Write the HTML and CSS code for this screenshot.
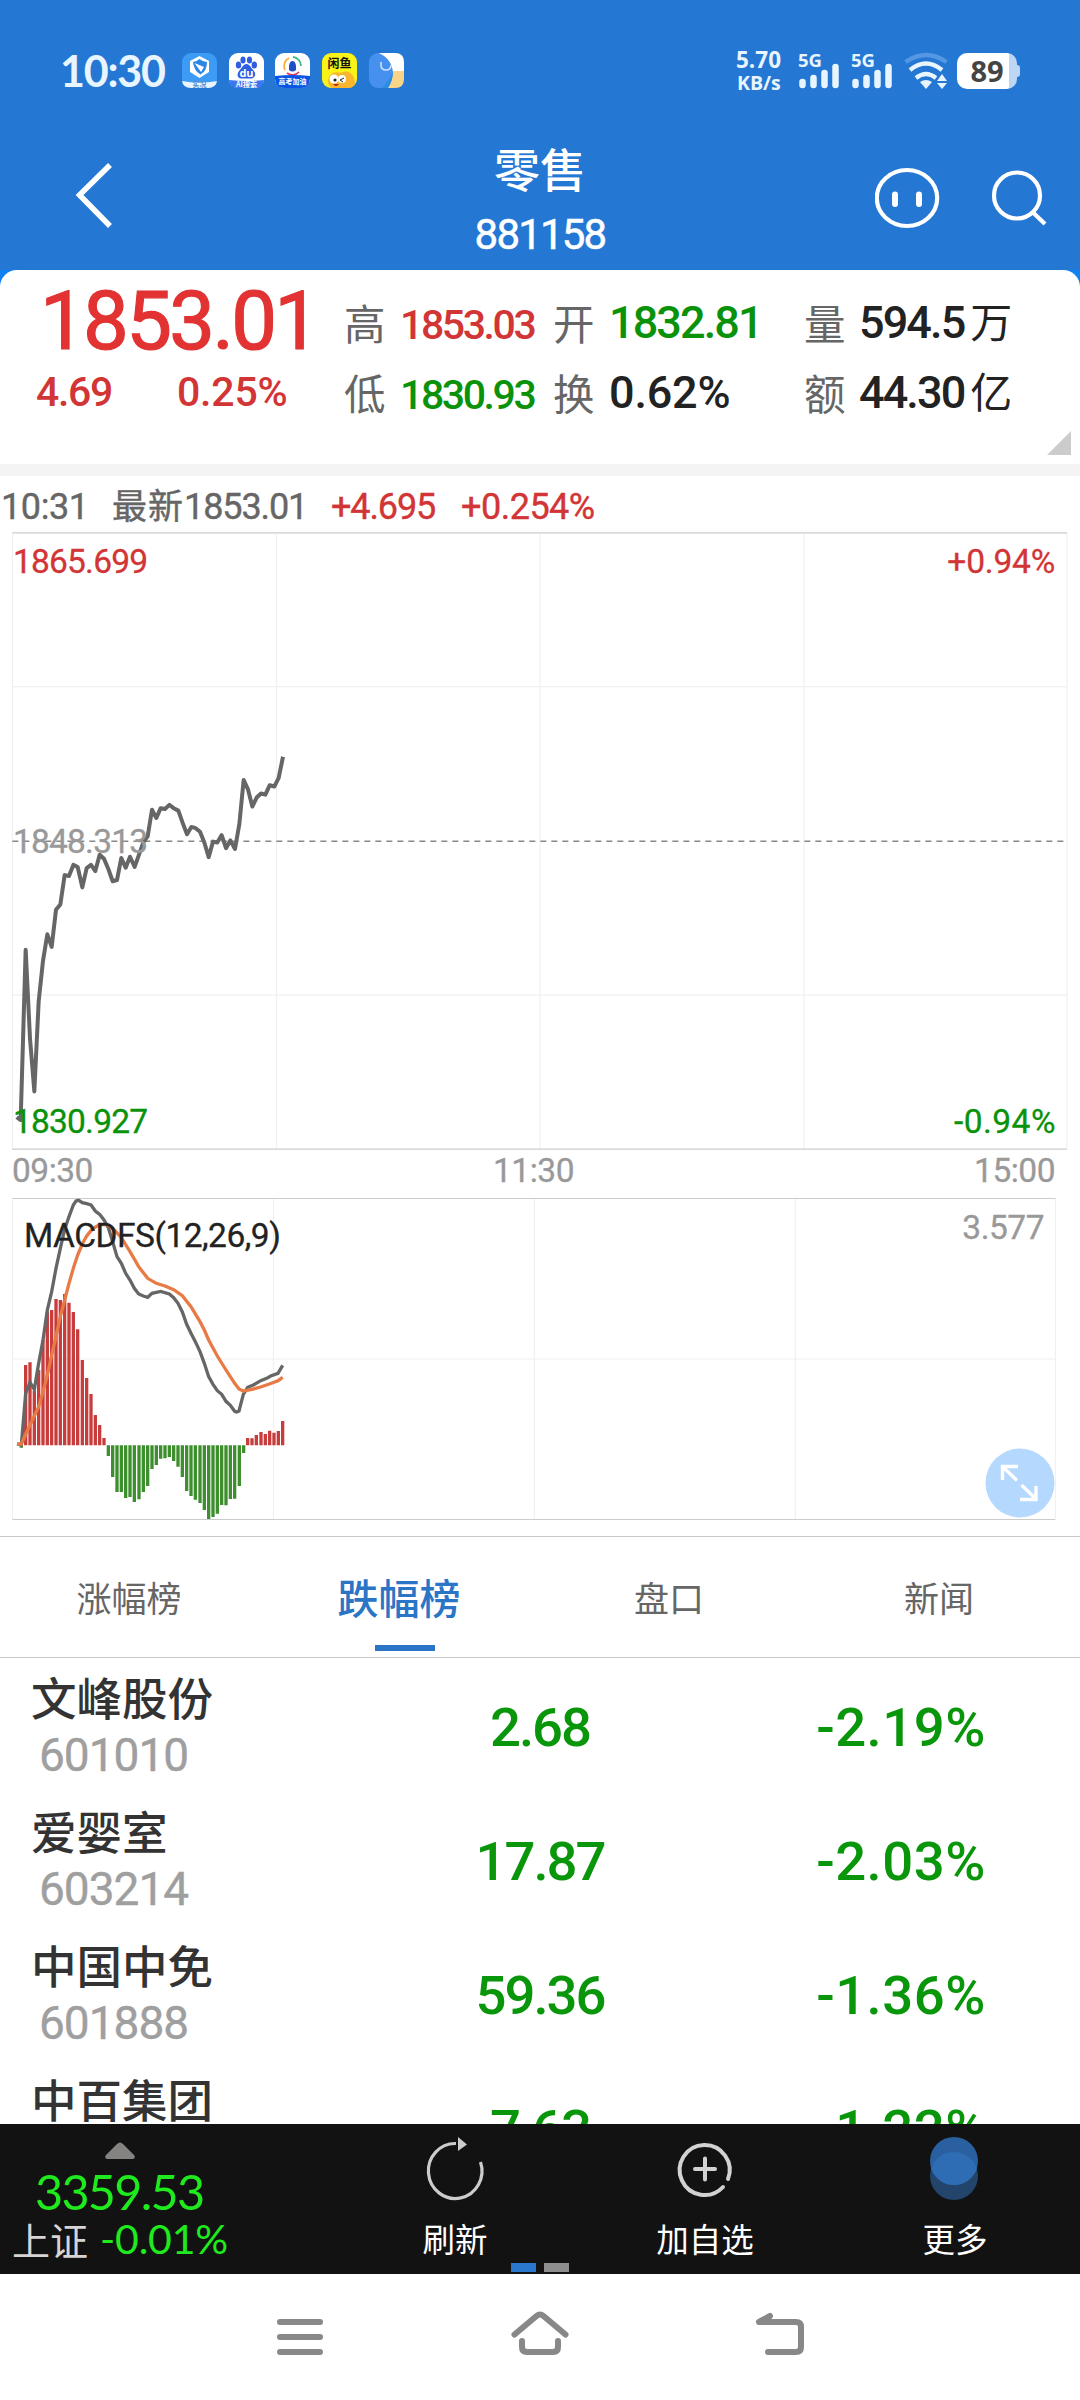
FILE: index.html
```html
<!DOCTYPE html>
<html lang="zh-CN">
<head>
<meta charset="utf-8">
<title>零售 881158</title>
<link rel="stylesheet" href="styles.css">
</head>
<body>
<div class="phone">
  <header class="top">
    <div class="status">
      <span class="clock">10:30</span>
      <div class="apps">
        <svg viewBox="0 0 35 35"><rect width="35" height="35" rx="9" fill="#3d9af5"/><path d="M0 28Q17.500 31 35 28Q34 35 26 35H9Q1 35 0 28Z" fill="#e8f4ff"/><path d="M17.500 3L27 8V19L17.500 25L8 19V8Z" fill="#fff"/><path d="M17.500 6Q21 9 25 9Q25 18 18.500 21.500Q12 18 11 9Q14 9 17.500 6Z" fill="#2b86e6"/><path d="M12.500 10L22 14L19 19Z" fill="#fff"/><text x="17.500" y="33.500" text-anchor="middle" class="mini mini-blue">实况</text></svg>
        <svg viewBox="0 0 35 35"><rect width="35" height="35" rx="9" fill="#fff"/><g fill="#2f5fe0"><ellipse cx="9.500" cy="12" rx="2.700" ry="3.500"/><ellipse cx="14" cy="7" rx="2.600" ry="3.500"/><ellipse cx="20.500" cy="7" rx="2.600" ry="3.500"/><ellipse cx="25.300" cy="12" rx="2.700" ry="3.500"/><path d="M17.500 11C21 11 22 15 25 18C28 22 25 26 21 25.500H13C9 26 7 22 10 18C13 15 14 11 17.500 11Z"/></g><text x="17.500" y="24" text-anchor="middle" class="du">du</text><path d="M0 27Q17.500 29 35 27Q34 35 26 35H9Q1 35 0 27Z" fill="#3b77ee"/><text x="17.500" y="33.500" text-anchor="middle" class="mini">AI搜索</text></svg>
        <svg viewBox="0 0 35 35"><rect width="35" height="35" rx="9" fill="#fff"/><g fill="none" stroke-width="1.800"><path d="M10 17A9 9 0 0 1 14 5" stroke="#f3b13c"/><path d="M18 4A9 9 0 0 1 26 13" stroke="#3fba8b"/><path d="M12 20A9 9 0 0 0 24 19" stroke="#e03a5a"/></g><path d="M17.500 8C20 8 21 11 21 14V17Q17.500 20 14 17V14C14 11 15 8 17.500 8Z" fill="#1b50c8"/><path d="M0 23Q17.500 21 35 23V26Q34 35 26 35H9Q1 35 0 26Z" fill="#0a55e6"/><text x="17.500" y="31" text-anchor="middle" class="mini">高考加油</text></svg>
        <svg viewBox="0 0 35 35"><rect width="35" height="35" rx="9" fill="#fbf217"/><path d="M6 28C7 20 13 18 19 20C25 16 33 20 33 31Q31 35 26 35H10Q6 33 6 28Z" fill="#f9b52d"/><circle cx="12" cy="26" r="4.500" fill="#fff"/><circle cx="20" cy="26" r="4" fill="#fff"/><circle cx="13" cy="27" r="1.600" fill="#222"/><path d="M22 25L18 27L21 29" fill="none" stroke="#222"/><path d="M11 31H17Q14 35 11 31Z" fill="#c0201a"/><text x="17.500" y="15" text-anchor="middle" class="fish">闲鱼</text></svg>
        <svg viewBox="0 0 35 35"><rect width="35" height="35" rx="9" fill="#4691f0"/><path d="M10 0H26Q35 0 35 9V20H24Q23 6 10 0Z" fill="#fff"/><path d="M24 18H35V26Q35 35 26 35H19Q24 27 24 18Z" fill="#f8d486"/><path d="M24 18Q24 27 19 35H13Q21 26 24 18Z" fill="#2a8de2"/><path d="M12 9V12Q12 17 17 17Q22 17 22 12" fill="none" stroke="#cfe4ff" stroke-width="1.600"/></svg>
      </div>
      <div class="net"><span>5.70</span><span class="unit">KB/s</span></div>
      <div class="signal"><span>5G</span><svg viewBox="0 0 42 26"><path d="M4.500 19V22M15.500 15V22M26.500 10V22M37.500 4V22" /></svg></div>
      <div class="signal"><span>5G</span><svg viewBox="0 0 42 26"><path d="M4.500 19V22M15.500 15V22M26.500 10V22M37.500 4V22" /></svg></div>
      <svg class="wifi" viewBox="0 0 44 38" fill="none" stroke="#e8f5ff" stroke-width="4.200"><path d="M1.500 10Q22 -4 42.500 10" stroke="#5497e2"/><path d="M6 18Q22 5 38 18"/><path d="M12 26Q22 18 32 26"/><path d="M16 30Q22 26 28 30L22 37ZM33 29L38 22L43 29ZM33 31H43L38 37Z" fill="#e8f5ff" stroke="none"/></svg>
      <div class="battery"><span>89</span></div>
    </div>
    <div class="titlebar">
      <svg class="back" viewBox="0 0 60 80"><path d="M43 10L12.500 40L43 71"/></svg>
      <h1><span>零售</span><span class="code">881158</span></h1>
      <svg class="tools" viewBox="0 0 190 80"><ellipse cx="32" cy="43" rx="30.200" ry="28"/><path class="eyes" d="M20 39.500V49M44 39.500V49"/><circle cx="142" cy="40.500" r="23"/><path d="M158 57.500L170 69"/></svg>
    </div>
  </header>

  <div class="corners">
    <section class="quote">
      <div class="last">
        <strong>1853.01</strong>
        <div class="delta"><span>4.69</span><span>0.25%</span></div>
      </div>
      <dl class="stats">
        <dt>高</dt><dd class="up small">1853.03</dd><dt>开</dt><dd class="down">1832.81</dd><dt>量</dt><dd>594.5<i>万</i></dd>
        <dt>低</dt><dd class="down small">1830.93</dd><dt>换</dt><dd class="wide">0.62%</dd><dt>额</dt><dd>44.30<i>亿</i></dd>
      </dl>
      <i class="expand-mark"></i>
    </section>
  </div>

  <div class="ticker"><span class="t-time">10:31</span><span class="t-last"><i>最新</i>1853.01</span><span class="up t-chg">+4.695</span><span class="up t-pct">+0.254%</span></div>

  <section class="chart price">
    <svg viewBox="0 29.400 3240 1516.550" preserveAspectRatio="none">
      <g class="grid"><path d="M37.500 31V1542M829.500 31V1542M1620 31V1542M2412 31V1542M3201 31V1542M37 408H3201M37 1164H3201"/></g>
      <path class="edge" d="M37 31.500H3201M37 1541.500H3201"/>
      <path class="dash" d="M37 787H3190"/>
      <path class="line" d="M50 1463L62 1470L77 1053L90 1270L103 1400L116 1180L129 1080L142 1015L155 1046L168 955L181 942L194 870L207 872L220 845L233 850L247 900L260 853L273 845L286 860L299 820L312 830L325 855L338 885L351 882L364 828L377 852L390 825L404 850L417 820L430 790L443 775L456 710L469 730L482 706L495 708L508 698L521 706L535 712L548 742L561 770L574 752L587 755L600 764L613 790L626 826L639 788L652 790L665 772L678 804L691 785L705 806L718 745L731 637L744 660L757 702L770 680L783 670L796 673L809 650L823 653L836 632L849 580"/>
    </svg>
    <span class="tag hi up">1865.699</span><span class="tag mid">1848.313</span><span class="tag lo down">1830.927</span>
    <span class="tag right hi up">+0.94%</span><span class="tag right lo down">-0.94%</span>
  </section>
  <div class="axis"><span>09:30</span><span>11:30</span><span>15:00</span></div>
  <section class="chart macd">
    <svg viewBox="0 171 3240 975">
      <g class="grid"><path d="M37.500 175V1138M820.500 175V1138M1603 175V1138M2386 175V1138M3166.500 175V1138M37 657H3166"/></g>
      <path class="edge" d="M37 175.500H3166M37 1138.500H3166"/>
      <path class="bars red" d="M77 916V675M90 916V667M103 916V752M116 916V690M129 916V600M142 916V515M155 916V510M168 916V477M181 916V480M194 916V462M207 916V488M220 916V516M233 916V568M247 916V660M260 916V714M273 916V762M286 916V825M299 916V855M312 916V894M743 916V894M756 916V895M769 916V885M783 916V876M796 916V882M809 916V872M822 916V878M835 916V873M848 916V843"/>
      <path class="bars green" d="M64 916V923M325 916V948M338 916V1011M351 916V1056M364 916V1056M377 916V1074M390 916V1071M403 916V1086M417 916V1078M430 916V1056M443 916V1038M456 916V987M469 916V975M482 916V956M495 916V955M508 916V951M521 916V963M534 916V980M547 916V1011M560 916V1053M573 916V1068M586 916V1079M600 916V1089M613 916V1110M626 916V1137M639 916V1131M652 916V1121M665 916V1095M678 916V1096M691 916V1077M704 916V1076M718 916V1038M731 916V939"/>
      <path class="dif" d="M51 912L64 915L77 760L90 727L103 748L116 670L129 600L142 510L155 455L168 385L181 325L194 268L207 230L220 195L228 183L236 181L247 188L260 191L273 195L286 213L299 223L312 240L325 263L338 305L351 350L364 370L377 400L390 420L403 445L416 462L430 468L443 472L456 460L482 454L508 462L521 473L534 490L547 516L560 553L573 580L586 605L600 635L613 670L626 710L639 733L652 752L665 763L678 784L691 796L704 814L710 816L717 813L730 763L743 742L760 735L782 722L800 715L812 708L834 700L848 676"/>
      <path class="dea" d="M51 912L64 912L90 855L116 800L129 755L142 705L155 645L168 590L181 530L194 480L207 430L220 385L233 345L247 312L260 288L273 272L286 261L299 254L320 254L338 264L364 293L390 335L416 380L443 415L469 430L495 438L521 449L547 467L573 500L600 545L613 570L626 600L652 648L678 690L704 730L717 747L730 753L756 748L782 741L808 732L834 722L848 712"/>
    </svg>
    <span class="tag name">MACDFS(12,26,9)</span><span class="tag peak">3.577</span>
    <svg class="zoom-btn" viewBox="0 0 70 70"><circle cx="35" cy="35" r="34.500" fill="#b5d8fe"/><path d="M17.500 32V18.500H33M17.500 18.500L32 32.500M36.500 37L51 51M51 38V51.500H35" fill="none" stroke="#fff" stroke-width="3.400"/></svg>
  </section>

  <nav class="tabs"><span>涨幅榜</span><span class="on">跌幅榜</span><span>盘口</span><span>新闻</span></nav>

  <main class="list">
    <div class="row"><div class="stock"><b>文峰股份</b><span>601010</span></div><span class="num">2.68</span><span class="num pct">-2.19%</span></div>
    <div class="row"><div class="stock"><b>爱婴室</b><span>603214</span></div><span class="num">17.87</span><span class="num pct">-2.03%</span></div>
    <div class="row"><div class="stock"><b>中国中免</b><span>601888</span></div><span class="num">59.36</span><span class="num pct">-1.36%</span></div>
    <div class="row"><div class="stock"><b>中百集团</b></div><span class="num">7.63</span><span class="num pct">-1.22%</span></div>
  </main>

  <footer class="dock">
    <div class="index">
      <svg viewBox="0 0 30 17"><path d="M2 17Q-1 16 1 13L12 2Q15 -1 18 2L29 13Q31 16 28 17Z" fill="#858282"/></svg>
      <span class="value">3359.53</span>
      <span class="chg"><i>上证</i><span>-0.01%</span></span>
    </div>
    <div class="action refresh"><svg viewBox="0 0 70 70"><path d="M36 9.500A26.800 27.500 0 1 0 60.500 28" fill="none" stroke="#ccc" stroke-width="3.200"/><path d="M38 3L47 10.500L38 17Z" fill="#ccc"/></svg><span>刷新</span></div>
    <div class="action add"><svg viewBox="0 0 70 70" fill="none" stroke="#d2d2d2" stroke-width="4" stroke-linecap="round"><path d="M53 53A25 25 0 1 1 58 45M35 24.500V45.500M25 35H45"/></svg><span>加自选</span></div>
    <div class="action more"><svg viewBox="0 0 70 70"><circle cx="34" cy="42" r="24" fill="#23456c"/><circle cx="34" cy="27" r="24" fill="#2a609f"/><path d="M11.200 34.500A24 24 0 0 1 56.800 34.500A24 24 0 0 1 11.200 34.500Z" fill="#2e6db3"/></svg><span>更多</span></div>
    <div class="pager"><i></i><i></i></div>
  </footer>

  <div class="sysnav">
    <svg viewBox="0 0 1080 126"><path d="M280 48H320M280 63H320M280 78H320M514.500 60.500L536.500 42Q540 39 543.500 42L565.500 60.500M522 67V73Q522 78 527 78H553Q558 78 558 73V67M770 42L759 48H796Q801 48 801 53V73Q801 78 796 78H768"/></svg>
  </div>
</div>
</body>
</html>
```

FILE: styles.css
```css
* { box-sizing: border-box; }
body { margin: 0; background: #fff; }
i { font-style: normal; }
svg { display: block; }

.phone {
  width: 1080px;
  height: 2400px;
  overflow: hidden;
  display: flex;
  flex-direction: column;
  font-family: Roboto, "Noto Sans CJK SC", sans-serif;
  color: #222;
  background: #fff;
}

.up { color: #d23535; }
.down { color: #0a920a; }

/* header */
.top { height: 270px; background: #2577d4; color: #fff; }
.status { height: 140px; padding: 1px 60px 0 60px; display: flex; align-items: center; }
.clock { font: 700 43px/50px Lato, sans-serif; color: #e8f5ff; width: 122px; letter-spacing: -1.200px; }
.apps { display: flex; gap: 11.700px; width: 554px; }
.apps svg { width: 35px; height: 35px; }
.mini { font: 700 7px "Noto Sans CJK SC", sans-serif; fill: #fff; }
.mini-blue { fill: #4b8fd0; }
.du { font: 700 11px "Open Sans", sans-serif; fill: #fff; }
.fish { font: 700 12px "Noto Sans CJK SC", sans-serif; fill: #111; }
.net { width: 62px; display: flex; flex-direction: column; font: 700 22.500px/23px "Open Sans", sans-serif; color: #e8f5ff; }
.net .unit { font-size: 19.500px; margin-left: 1px; }
.signal { width: 53px; height: 37px; font: 700 18.500px/16px "Open Sans", sans-serif; color: #e8f5ff; display: flex; flex-direction: column; }
.signal svg { width: 42px; height: 26px; margin-top: -5px; }
.signal path { stroke: #e8f5ff; stroke-width: 6.500; stroke-linecap: round; }
.wifi { width: 44px; height: 38px; }
.battery { width: 60px; height: 36px; margin-left: 9px; border-radius: 10px; background: linear-gradient(90deg, #fff 52px, #bcd6f3 52px); text-align: center; font: 700 29px/36px "Open Sans", sans-serif; color: #444; position: relative; }
.battery::after { content: ""; position: absolute; right: -3px; top: 12px; width: 4px; height: 12px; border-radius: 0 3px 3px 0; background: #bcd6f3; }

.titlebar { display: flex; height: 130px; padding-top: 15px; }
.back { width: 60px; height: 80px; margin-left: 67px; }
.back path { fill: none; stroke: #fff; stroke-width: 5.500; }
.titlebar h1 { margin: -18px 0 0 323px; width: 180px; font: 500 46px/60px "Noto Sans CJK SC", sans-serif; text-align: center; display: flex; flex-direction: column; }
.titlebar .code { font: 400 42px/62px Roboto, sans-serif; letter-spacing: -1.800px; margin-top: 7px; -webkit-text-stroke: .5px #fff; }
.tools { width: 190px; height: 80px; margin-left: 245px; fill: none; stroke: #fff; stroke-width: 4.200; }
.tools .eyes { stroke-width: 6; stroke-linecap: round; }

/* quote */
.corners { background: #1180f5; }
.quote { height: 206px; border-bottom: 12px solid #f4f4f4; border-radius: 17px 17px 0 0; background: #fff; display: flex; position: relative; }
.last { width: 344px; }
.last strong { display: block; height: 96px; padding-left: 40px; font: 400 81.500px/103px Roboto, sans-serif; letter-spacing: -2.700px; color: #e23232; -webkit-text-stroke: 1.200px #e23232; }
.delta { display: flex; font-size: 41px; line-height: 52px; font-weight: 500; letter-spacing: -1.300px; color: #d23535; }
.delta span:first-child { width: 143px; padding-left: 36px; }
.delta span:last-child { padding-left: 34px; letter-spacing: -0.200px; }
.stats { margin: 27px 0 0; display: grid; grid-template-columns: 56px 153px 56px 195px 55px 1fr; grid-auto-rows: 70px; line-height: 52px; flex: 1; }
.stats dt { font: 400 41.500px/50px "Noto Sans CJK SC", sans-serif; color: #666; }
.stats dd { margin: 0; font-size: 45px; font-weight: 500; letter-spacing: -1.900px; white-space: nowrap; }
.stats dd.wide { letter-spacing: -0.200px; }
.stats dd.small { font-size: 41px; line-height: 56px; letter-spacing: -2.400px; }
.stats dd i { font: 400 42px/40px "Noto Sans CJK SC", sans-serif; letter-spacing: 0; margin-left: 6px; }
.expand-mark { position: absolute; right: 9px; bottom: 9px; border: 12px solid; border-color: transparent #ccc #ccc transparent; }

.ticker { height: 56px; padding: 4px 0 0 1px; font-size: 36px; line-height: 54px; font-weight: 400; color: #666; display: flex; letter-spacing: -1.100px; white-space: nowrap; -webkit-text-stroke: .4px; }
.t-time { width: 111px; letter-spacing: -0.400px; }
.t-last { width: 219px; }
.t-last i { font: 400 35px/40px "Noto Sans CJK SC", sans-serif; letter-spacing: 1px; }
.t-chg { width: 130px; }
.t-pct { letter-spacing: -0.500px; }

/* charts */
.chart { position: relative; }
.chart > svg:first-child { width: 1080px; }
.price > svg:first-child { height: 619px; }
.macd > svg:first-child { height: 325px; }
.chart path { vector-effect: non-scaling-stroke; fill: none; }
.grid path { stroke: #f0f0f0; stroke-width: 1.200; }
.edge { stroke: #ccc; stroke-width: 1.200; }
.dash { stroke: #888; stroke-width: 1.500; stroke-dasharray: 6 5; }
.line { stroke: #666; stroke-width: 4; stroke-linejoin: round; }
.bars { stroke-width: 3.300; }
.red { stroke: #c83c3c; }
.green { stroke: #3d8f2d; }
.dif { stroke: #666; stroke-width: 3.300; }
.dea { stroke: #e87a45; stroke-width: 3.300; }
.tag { position: absolute; left: 13px; font-size: 33.500px; line-height: 40px; letter-spacing: -0.800px; -webkit-text-stroke: .3px; }
.tag.hi { top: 10px; }
.tag.mid { top: 290px; color: #999; }
.tag.lo { bottom: 9px; }
.tag.right { left: auto; right: 25px; letter-spacing: -0.200px; }
.tag.right.lo { letter-spacing: 0.500px; right: 24px; }
.tag.name { left: 24px; top: 19px; letter-spacing: -0.500px; }
.tag.peak { left: auto; right: 36px; top: 11px; color: #999; letter-spacing: -0.500px; }
.zoom-btn { position: absolute; left: 984.500px; top: 251px; width: 70px; height: 70px; }
.axis { height: 46px; padding: 0 25px 0 12px; display: flex; justify-content: space-between; font-size: 33.500px; line-height: 40px; letter-spacing: -0.500px; color: #999; -webkit-text-stroke: .3px; }

/* tabs */
.tabs { margin-top: 14px; height: 122px; border-top: 1px solid #c8c8c8; border-bottom: 1px solid #c8c8c8; display: flex; font: 400 35px/119px "Noto Sans CJK SC", sans-serif; color: #666; }
.tabs span { flex: 1; padding-right: 12px; text-align: center; position: relative; }
.tabs .on { font-size: 41px; font-weight: 500; color: #2b75c7; }
.on::after { content: ""; position: absolute; left: 105px; bottom: 6px; width: 60px; height: 6px; background: #2b75c7; }

/* list */
.list { height: 466px; overflow: hidden; }
.row { height: 134px; display: grid; grid-template-columns: 360px 360px 360px; }
.stock { padding: 8px 0 0 31px; }
.stock b { display: block; font: 500 45.500px/60px "Noto Sans CJK SC", sans-serif; color: #333; }
.stock span { display: block; padding: 1px 0 0 8px; font-size: 46px; line-height: 56px; letter-spacing: -1px; color: #9f9f9f; -webkit-text-stroke: .4px; }
.num { text-align: center; font-size: 54.500px; font-weight: 500; line-height: 139px; letter-spacing: -2px; color: #0a960a; }
.num.pct { letter-spacing: 0.500px; padding-left: 2px; }

/* dock */
.dock { height: 150px; background: #121212; color: #fff; display: flex; position: relative; }
.index { width: 382px; color: #1eea1e; font-family: Lato, sans-serif; }
.index svg { width: 30px; height: 17px; margin: 18px 0 0 105px; }
.value { display: block; margin-top: 5px; padding-left: 35px; font-size: 48.500px; line-height: 54px; letter-spacing: -1.700px; }
.chg { display: flex; padding-left: 12px; font-size: 41px; line-height: 42px; letter-spacing: -0.200px; }
.chg i { font: 400 38px/42px "Noto Sans CJK SC", sans-serif; letter-spacing: 0; color: #d8d4d4; margin-right: 12px; }
.action { display: flex; flex-direction: column; align-items: center; font: 400 32.500px/44px "Noto Sans CJK SC", sans-serif; padding-top: 10px; }
.action svg { width: 70px; height: 70px; margin-bottom: 12px; }
.refresh { width: 146px; }
.add { width: 354px; }
.more { width: 146px; }
.pager { position: absolute; left: 511px; bottom: 2px; display: flex; gap: 8px; }
.pager i { width: 25px; height: 9px; background: #2a78ce; }
.pager i:last-child { background: #8e8e8e; }

.sysnav { height: 126px; background: #fff; }
.sysnav path { fill: none; stroke: #888; stroke-width: 6; stroke-linecap: round; stroke-linejoin: round; }
```
